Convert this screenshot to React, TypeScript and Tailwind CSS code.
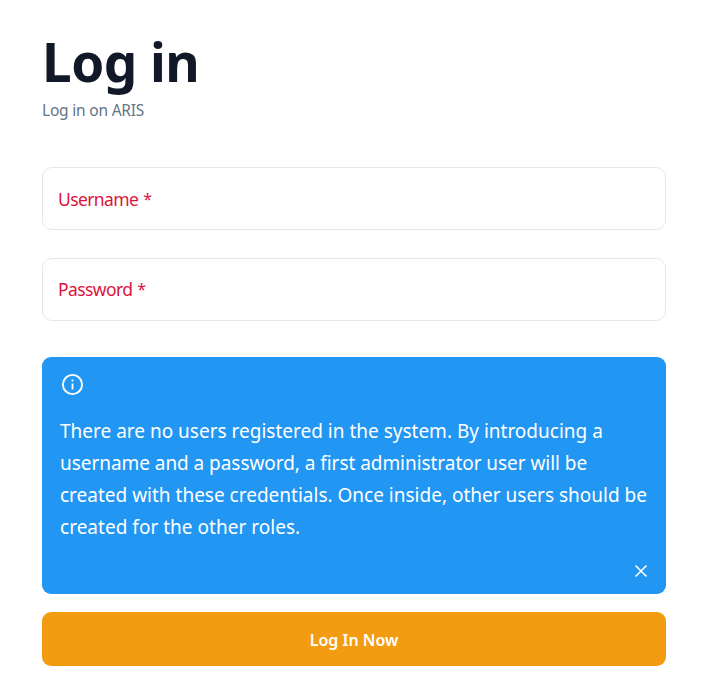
import React from "react";

const messageLines = [
  { text: "There are no users registered in the system. By introducing a", tracking: "tracking-[0px]" },
  { text: "username and a password, a first administrator user will be", tracking: "tracking-[-0.05px]" },
  { text: "created with these credentials. Once inside, other users should be", tracking: "tracking-[0px]" },
  { text: "created for the other roles.", tracking: "tracking-[0.02px]" },
];

const Field = ({ label, offset }: { label: string; offset: string }) => (
  <label className={`flex h-[63px] items-center rounded-[10px] border border-[#e5e7f0] px-[15px] text-[17.5px] tracking-[-0.6px] text-[#dc143c] ${offset}`}>
    {label}
    <span className="ml-[5px] text-[16px]">*</span>
  </label>
);

export default function App() {
  return (
    <main className="h-[692px] w-[706px] bg-white pl-[42px] pr-10 pt-[27px] font-['Noto_Sans','Open_Sans',sans-serif]">
      <h1 className="h-[72px] whitespace-nowrap text-[53px] font-bold leading-[70px] tracking-[-0.5px] text-[#111827]">Log in</h1>
      <p className="h-[22px] text-[15.5px] leading-[22px] tracking-[-0.2px] text-[#64748b]">Log in on ARIS</p>
      <div className="mt-[46px] flex flex-col gap-7">
        <Field label="Username" offset="pt-px" />
        <Field label="Password" offset="pb-px" />
      </div>
      <section className="mt-9 flex h-[237px] flex-col rounded-[9px] bg-[#2196f3] px-[18px] pt-[15px] text-white">
        <svg className="block shrink-0" width="25" height="25" viewBox="0 0 25 25" fill="none" stroke="currentColor">
          <circle cx="12.5" cy="12.5" r="9.6" strokeWidth="1.9" />
          <path d="M12.5 11.5v6M12.5 7.5v2" strokeWidth="1.8" />
        </svg>
        <p className="mt-[18px] whitespace-nowrap text-[19px] leading-8">
          {messageLines.map((line) => (
            <span key={line.text} className={`block ${line.tracking}`}>{line.text}</span>
          ))}
        </p>
        <button className="-mr-px mt-5 flex size-4 items-center justify-center self-end" aria-label="Close">
          <svg width="14" height="14" viewBox="0 0 14 14" fill="none" stroke="currentColor" strokeWidth="1.6">
            <path d="M1.5 1.5l11 11M12.5 1.5l-11 11" />
          </svg>
        </button>
      </section>
      <button className="mt-[18px] flex h-[54px] w-full items-center justify-center rounded-[9px] bg-[#f39c12] pt-0.5 text-[16px] font-semibold text-white">Log In Now</button>
    </main>
  );
}
